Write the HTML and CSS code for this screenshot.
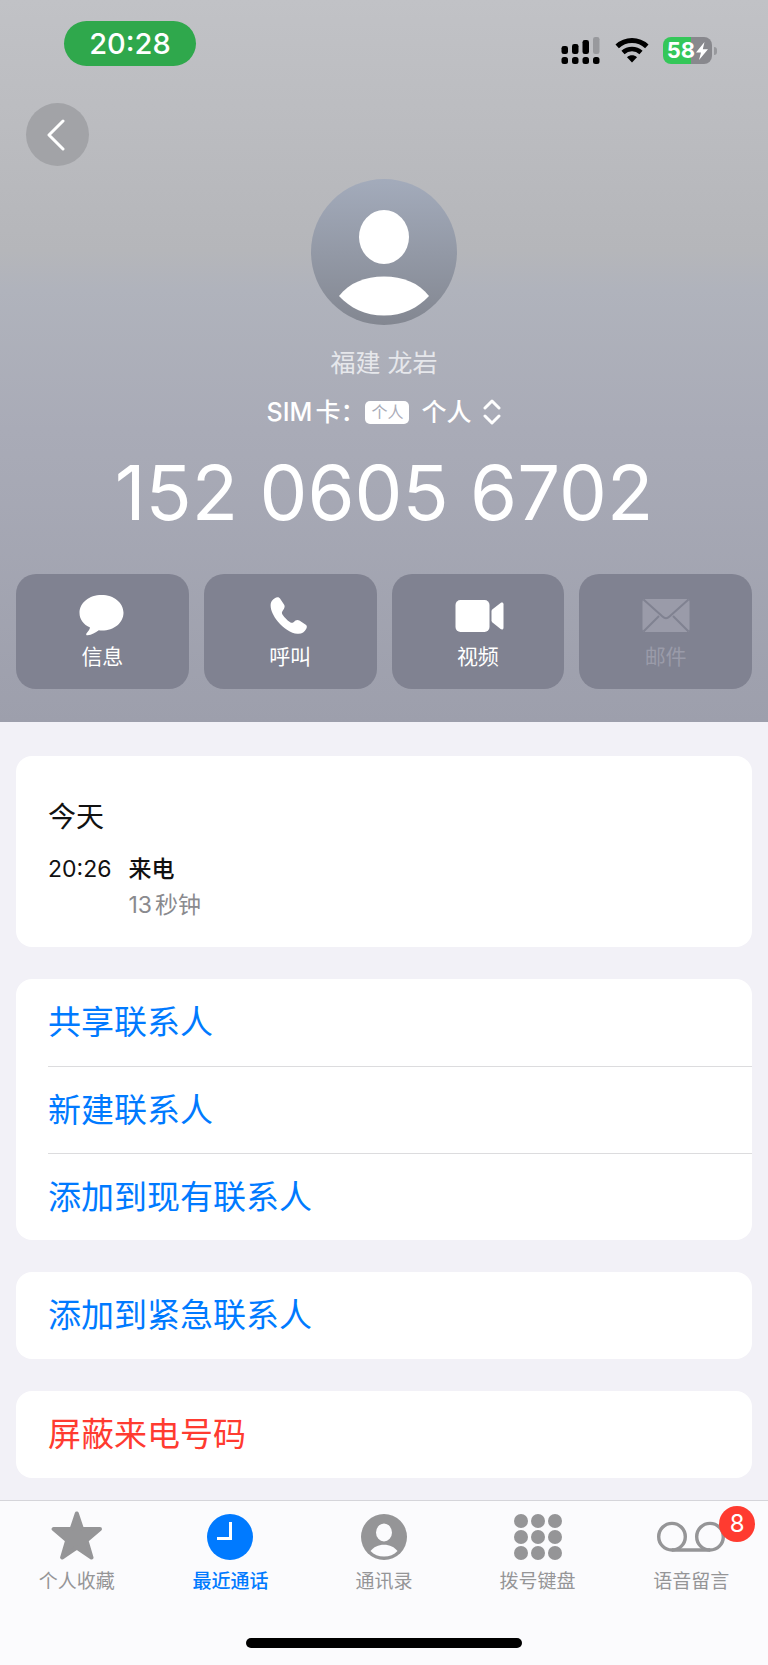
FILE: index.html
```html
<!DOCTYPE html>
<html lang="zh-CN">
<head>
  <meta charset="UTF-8" />
  <meta name="viewport" content="width=device-width, initial-scale=1.0"/>
  <title>最近通话</title>
  <link rel="stylesheet" href="styles.css">
</head>
<body>
  <header class="hero">
    <div class="status-bar">
      <span class="clock">20:28</span>
      <div class="status-icons">
        <svg class="signal" viewBox="0 0 40 27" aria-hidden="true">
          <rect x="0.500" y="9" width="6.500" height="8" rx="2.300"/>
          <rect x="11" y="7" width="6.500" height="10" rx="2.300"/>
          <rect x="21.500" y="3" width="6.500" height="14" rx="2.300"/>
          <rect x="32" y="0" width="6.500" height="17" rx="2.300" class="faded"/>
          <rect x="0.500" y="20" width="6.500" height="7" rx="2.500"/>
          <rect x="11" y="20" width="6.500" height="7" rx="2.500"/>
          <rect x="21.500" y="20" width="6.500" height="7" rx="2.500"/>
          <rect x="32" y="20" width="6.500" height="7" rx="2.500"/>
        </svg>
        <svg class="wifi" viewBox="0 0 34 27" aria-hidden="true">
          <path d="M2.200 9.400C10.500 1.600 23.500 1.600 31.800 9.400" fill="none" stroke="#000" stroke-width="5"/>
          <path d="M8 15.500C13 10.800 21 10.800 26 15.500" fill="none" stroke="#000" stroke-width="4.600"/>
          <path d="M12 20.300C15 17.700 19 17.700 22 20.300L17 25.500Z"/>
        </svg>
        <div class="battery">
          <span class="battery-body">58<svg class="bolt" viewBox="0 0 12 18" aria-hidden="true"><path d="M8.500 0L0 10.500H5L3 18L12 7.200H6.800Z"/></svg></span>
          <span class="battery-cap"></span>
        </div>
      </div>
    </div>

    <button class="back" aria-label="返回">
      <svg viewBox="0 0 18 32" aria-hidden="true"><path d="M16 2L2 16L16 30"/></svg>
    </button>

    <div class="contact">
      <svg class="avatar" viewBox="0 0 146 146" aria-hidden="true">
        <defs>
          <linearGradient id="avatarFill" x1="0" y1="0" x2="0" y2="1">
            <stop offset="0" stop-color="#a3abbb"/>
            <stop offset="1" stop-color="#838791"/>
          </linearGradient>
        </defs>
        <circle cx="73" cy="73" r="73" fill="url(#avatarFill)"/>
        <ellipse cx="73" cy="58" rx="25" ry="27" fill="#fff"/>
        <path d="M28 117C38 104 54 97.500 73 97.500S108 104 118 117C107 129 92 136.500 73 136.500S39 129 28 117Z" fill="#fff"/>
      </svg>
      <p class="location">福建 龙岩</p>
      <button class="sim">
        <span>SIM卡：</span>
        <span class="sim-tag">个人</span>
        <span>个人</span>
        <svg viewBox="0 0 18 26" aria-hidden="true"><path d="M2 9L9 2L16 9M2 17L9 24L16 17"/></svg>
      </button>
      <h1 class="number">152 0605 6702</h1>
    </div>

    <div class="actions">
      <button class="action">
        <svg viewBox="-2 0 52 44" aria-hidden="true"><path d="M23.500 2C36 2 45.500 9.800 45.500 19.800S36 37.600 24 37.600C22.800 37.600 21.800 37.500 20.800 37.300C17.500 39.700 13.500 42 9.600 42.300C8 42.400 7.700 41 8.800 39.900C10.500 38.200 11.600 36.600 12 34.600C5.500 31.600 1.500 26.400 1.500 19.800C1.500 9.800 11.200 2 23.500 2Z"/></svg>
        <span>信息</span>
      </button>
      <button class="action">
        <svg viewBox="-2 0 52 44" aria-hidden="true"><path d="M11.500 4.200C12.600 4 13.300 4.600 14 5.600L18 11.600C18.900 13 18.800 14.400 18 15.700L16.400 18.300C15.600 19.600 15.800 20.600 16.600 21.700C18.800 24.800 21 27 24.200 29.300C25.300 30.100 26.400 30 27.500 29.200L29.500 27.600C30.800 26.700 32 26.700 33.400 27.600L39.400 31.600C41 32.700 41.200 34 40.400 35.400C38.600 39 35.600 41.200 31.400 40.800C25 40.200 17.500 35.200 11.800 28.400C7.400 23.200 4.600 17.200 4.600 12.200C4.600 8 7.800 4.800 11.500 4.200Z"/></svg>
        <span>呼叫</span>
      </button>
      <button class="action">
        <svg viewBox="0 0 52 44" aria-hidden="true">
          <rect x="3.500" y="7" width="34" height="32" rx="5"/>
          <path d="M39.500 18.500C39.500 17.500 39.800 16.900 40.500 16.300L48.600 10C50 9 51.500 9.600 51.500 11.300V34.700C51.500 36.400 50 37 48.600 36L40.500 29.500C39.800 28.900 39.500 28.200 39.500 27.300Z"/>
        </svg>
        <span>视频</span>
      </button>
      <button class="action" disabled>
        <svg viewBox="0 0 52 44" aria-hidden="true">
          <rect x="2.500" y="6" width="47" height="33" rx="3"/>
          <path class="fold" d="M3.500 6.500L22.500 23.500Q26 27 29.500 23.500L48.500 6.500M3.500 38.500L19 23M48.500 38.500L33 23"/>
        </svg>
        <span>邮件</span>
      </button>
    </div>
  </header>

  <main class="content">
    <section class="card history">
      <h2>今天</h2>
      <div class="call">
        <time>20:26</time>
        <div>
          <p class="call-type">来电</p>
          <p class="call-length">13秒钟</p>
        </div>
      </div>
    </section>

    <div class="card">
      <button class="row">共享联系人</button>
      <button class="row">新建联系人</button>
      <button class="row">添加到现有联系人</button>
    </div>

    <div class="card">
      <button class="row">添加到紧急联系人</button>
    </div>

    <div class="card">
      <button class="row danger">屏蔽来电号码</button>
    </div>
  </main>

  <footer class="tab-bar">
    <nav class="tabs">
      <a class="tab" href="#favorites">
        <svg viewBox="0 0 72 50" aria-hidden="true"><path class="star" d="M35.800 2.500L41 18H59L45.500 29.500L50.500 46.500L35.800 36.500L21.100 46.500L26.100 29.500L12.600 18H30.600Z"/></svg>
        <span>个人收藏</span>
      </a>
      <a class="tab active" href="#recents">
        <svg viewBox="0 0 72 50" aria-hidden="true">
          <circle cx="36" cy="26" r="23"/>
          <path d="M36.500 11V27.500H23" fill="none" stroke="#fff" stroke-width="3"/>
        </svg>
        <span>最近通话</span>
      </a>
      <a class="tab" href="#contacts">
        <svg viewBox="0 0 72 50" aria-hidden="true">
          <circle cx="36" cy="26" r="23"/>
          <ellipse cx="36" cy="21.500" rx="8" ry="9" fill="#fbfbfd"/>
          <path d="M22.500 40C25.500 36 30.300 33.700 36 33.700S46.500 36 49.500 40C46 43.700 41.500 45.500 36 45.500S26 43.700 22.500 40Z" fill="#fbfbfd"/>
        </svg>
        <span>通讯录</span>
      </a>
      <a class="tab" href="#keypad">
        <svg viewBox="0 0 72 50" aria-hidden="true">
          <circle cx="19" cy="10" r="7"/><circle cx="36" cy="10" r="7"/><circle cx="53" cy="10" r="7"/>
          <circle cx="19" cy="26" r="7"/><circle cx="36" cy="26" r="7"/><circle cx="53" cy="26" r="7"/>
          <circle cx="19" cy="42" r="7"/><circle cx="36" cy="42" r="7"/><circle cx="53" cy="42" r="7"/>
        </svg>
        <span>拨号键盘</span>
      </a>
      <a class="tab" href="#voicemail">
        <svg viewBox="0 0 72 50" aria-hidden="true">
          <g fill="none" stroke="#959597" stroke-width="3.400">
            <circle cx="17" cy="25.700" r="13.300"/>
            <circle cx="55" cy="25.700" r="13.300"/>
            <path d="M17 39H55"/>
          </g>
        </svg>
        <span>语音留言</span>
        <span class="badge">8</span>
      </a>
    </nav>
    <div class="home-indicator"></div>
  </footer>
</body>
</html>
```

FILE: styles.css
```css
* {
  box-sizing: border-box;
  margin: 0;
  padding: 0;
}

body {
  font-family: Inter, 'Noto Sans CJK SC', sans-serif;
  text-autospace: normal;
  background: #f2f1f7;
  color: #111;
  min-height: 100vh;
  display: flex;
  flex-direction: column;
}

button {
  font: inherit;
  color: inherit;
  background: none;
  border: none;
  cursor: pointer;
}

svg {
  display: block;
}

/* header */
.hero {
  background: linear-gradient(#c1c2c6 0, #b5b6ba 250px, #b0b3bc 290px, #a9abb7 430px, #9d9fac 100%);
  color: #fff;
  padding: 21px 16px 33px;
}

.status-bar {
  display: flex;
  justify-content: space-between;
  align-items: flex-end;
  padding: 0 35px 0 48px;
}

.clock {
  width: 132px;
  border-radius: 23px;
  background: #2fa84c;
  font-size: 29px;
  font-weight: 500;
  line-height: 45px;
  text-align: center;
}

.status-icons {
  display: flex;
  align-items: center;
  gap: 14px;
  padding-bottom: 2px;
}

.signal {
  width: 40px;
  height: 27px;
}

.faded {
  fill: #98999d;
}

.wifi {
  width: 34px;
  height: 27px;
}

.battery {
  display: flex;
  align-items: center;
  gap: 2px;
}

.battery-body {
  display: flex;
  align-items: center;
  justify-content: center;
  gap: 1px;
  width: 49px;
  border-radius: 8px;
  background: linear-gradient(to right, #34c759 58%, #88888d 58%);
  font-size: 22px;
  font-weight: 700;
  line-height: 27px;
}

.bolt {
  width: 12px;
  height: 18px;
  fill: #fff;
}

.battery-cap {
  width: 3px;
  height: 8px;
  border-radius: 0 3px 3px 0;
  background: #98999d;
}

.back {
  display: flex;
  align-items: center;
  justify-content: center;
  width: 63px;
  height: 63px;
  margin: 37px 0 0 10px;
  padding-right: 4px;
  border-radius: 50%;
  background: #a2a3a7;
}

.back svg {
  width: 18px;
  height: 32px;
}

.back path,
.sim path {
  fill: none;
  stroke: #fff;
  stroke-width: 3;
  stroke-linecap: round;
  stroke-linejoin: round;
}

.contact {
  display: flex;
  flex-direction: column;
  align-items: center;
  margin-top: 13px;
}

.avatar {
  width: 146px;
  height: 146px;
}

.location {
  margin-top: 22px;
  font-size: 25px;
  line-height: 32px;
  color: #e6e7eb;
}

.sim {
  display: flex;
  align-items: center;
  margin-top: 17px;
  gap: 12px;
  font-size: 25px;
  font-weight: 500;
  line-height: 32px;
}

.sim-tag {
  width: 44px;
  border-radius: 5px;
  background: #fff;
  color: #a9abb7;
  font-size: 16px;
  font-weight: 400;
  line-height: 23px;
  margin-left: -12px;
}

.sim svg {
  width: 18px;
  height: 26px;
}

.number {
  margin-top: 24px;
  font-size: 76px;
  font-weight: 400;
  line-height: 80px;
  white-space: nowrap;
}

.actions {
  display: grid;
  grid-template-columns: repeat(4, 1fr);
  gap: 15px;
  margin-top: 42px;
}

.action {
  display: flex;
  flex-direction: column;
  align-items: center;
  gap: 8px;
  padding: 19px 0 20px;
  border-radius: 20px;
  background: #808291;
  font-size: 21px;
  line-height: 24px;
}

.action svg {
  width: 52px;
  height: 44px;
  fill: #fff;
}

.action:disabled {
  color: #9a9ba9;
}

.action:disabled svg {
  fill: #9a9ba9;
}

.fold {
  fill: none;
  stroke: #808291;
  stroke-width: 2;
}

/* lists */
.content {
  flex: 1;
  display: flex;
  flex-direction: column;
  gap: 32px;
  padding: 34px 16px 21px;
}

.card {
  background: #fff;
  border-radius: 16px;
}

.history {
  padding: 43px 32px 24px;
}

.history h2 {
  font-size: 28px;
  font-weight: 400;
  line-height: 36px;
}

.call {
  display: flex;
  gap: 17px;
  margin-top: 16px;
  font-size: 23px;
  line-height: 36px;
}

.call-type {
  font-weight: 500;
}

.call-length {
  color: #8a8a8e;
}

.row {
  display: block;
  width: calc(100% - 32px);
  margin-left: 32px;
  color: #007aff;
  font-size: 33px;
  line-height: 87px;
  text-align: left;
}

.row + .row {
  border-top: 1px solid #dcdcde;
  line-height: 86px;
}

.danger {
  color: #ff3b30;
}

/* tab bar */
.tab-bar {
  background: #fbfbfd;
  border-top: 1px solid #d5d5da;
  padding-bottom: 17px;
}

.tabs {
  display: grid;
  grid-template-columns: repeat(5, 1fr);
  padding-top: 10px;
}

.tab {
  position: relative;
  display: flex;
  flex-direction: column;
  align-items: center;
  gap: 9px;
  color: #959597;
  font-size: 19px;
  line-height: 24px;
  text-decoration: none;
}

.tab svg {
  width: 72px;
  height: 50px;
  fill: currentColor;
}

.tab.active {
  color: #007aff;
  font-weight: 500;
}

.star {
  stroke: currentColor;
  stroke-width: 4;
  stroke-linejoin: round;
}

.badge {
  position: absolute;
  top: -5px;
  left: calc(50% + 28px);
  width: 36px;
  border-radius: 50%;
  background: #ff3b30;
  color: #fff;
  font-size: 24px;
  line-height: 36px;
  text-align: center;
}

.home-indicator {
  width: 36%;
  height: 10px;
  margin: 44px auto 0;
  border-radius: 5px;
  background: #000;
}
```
